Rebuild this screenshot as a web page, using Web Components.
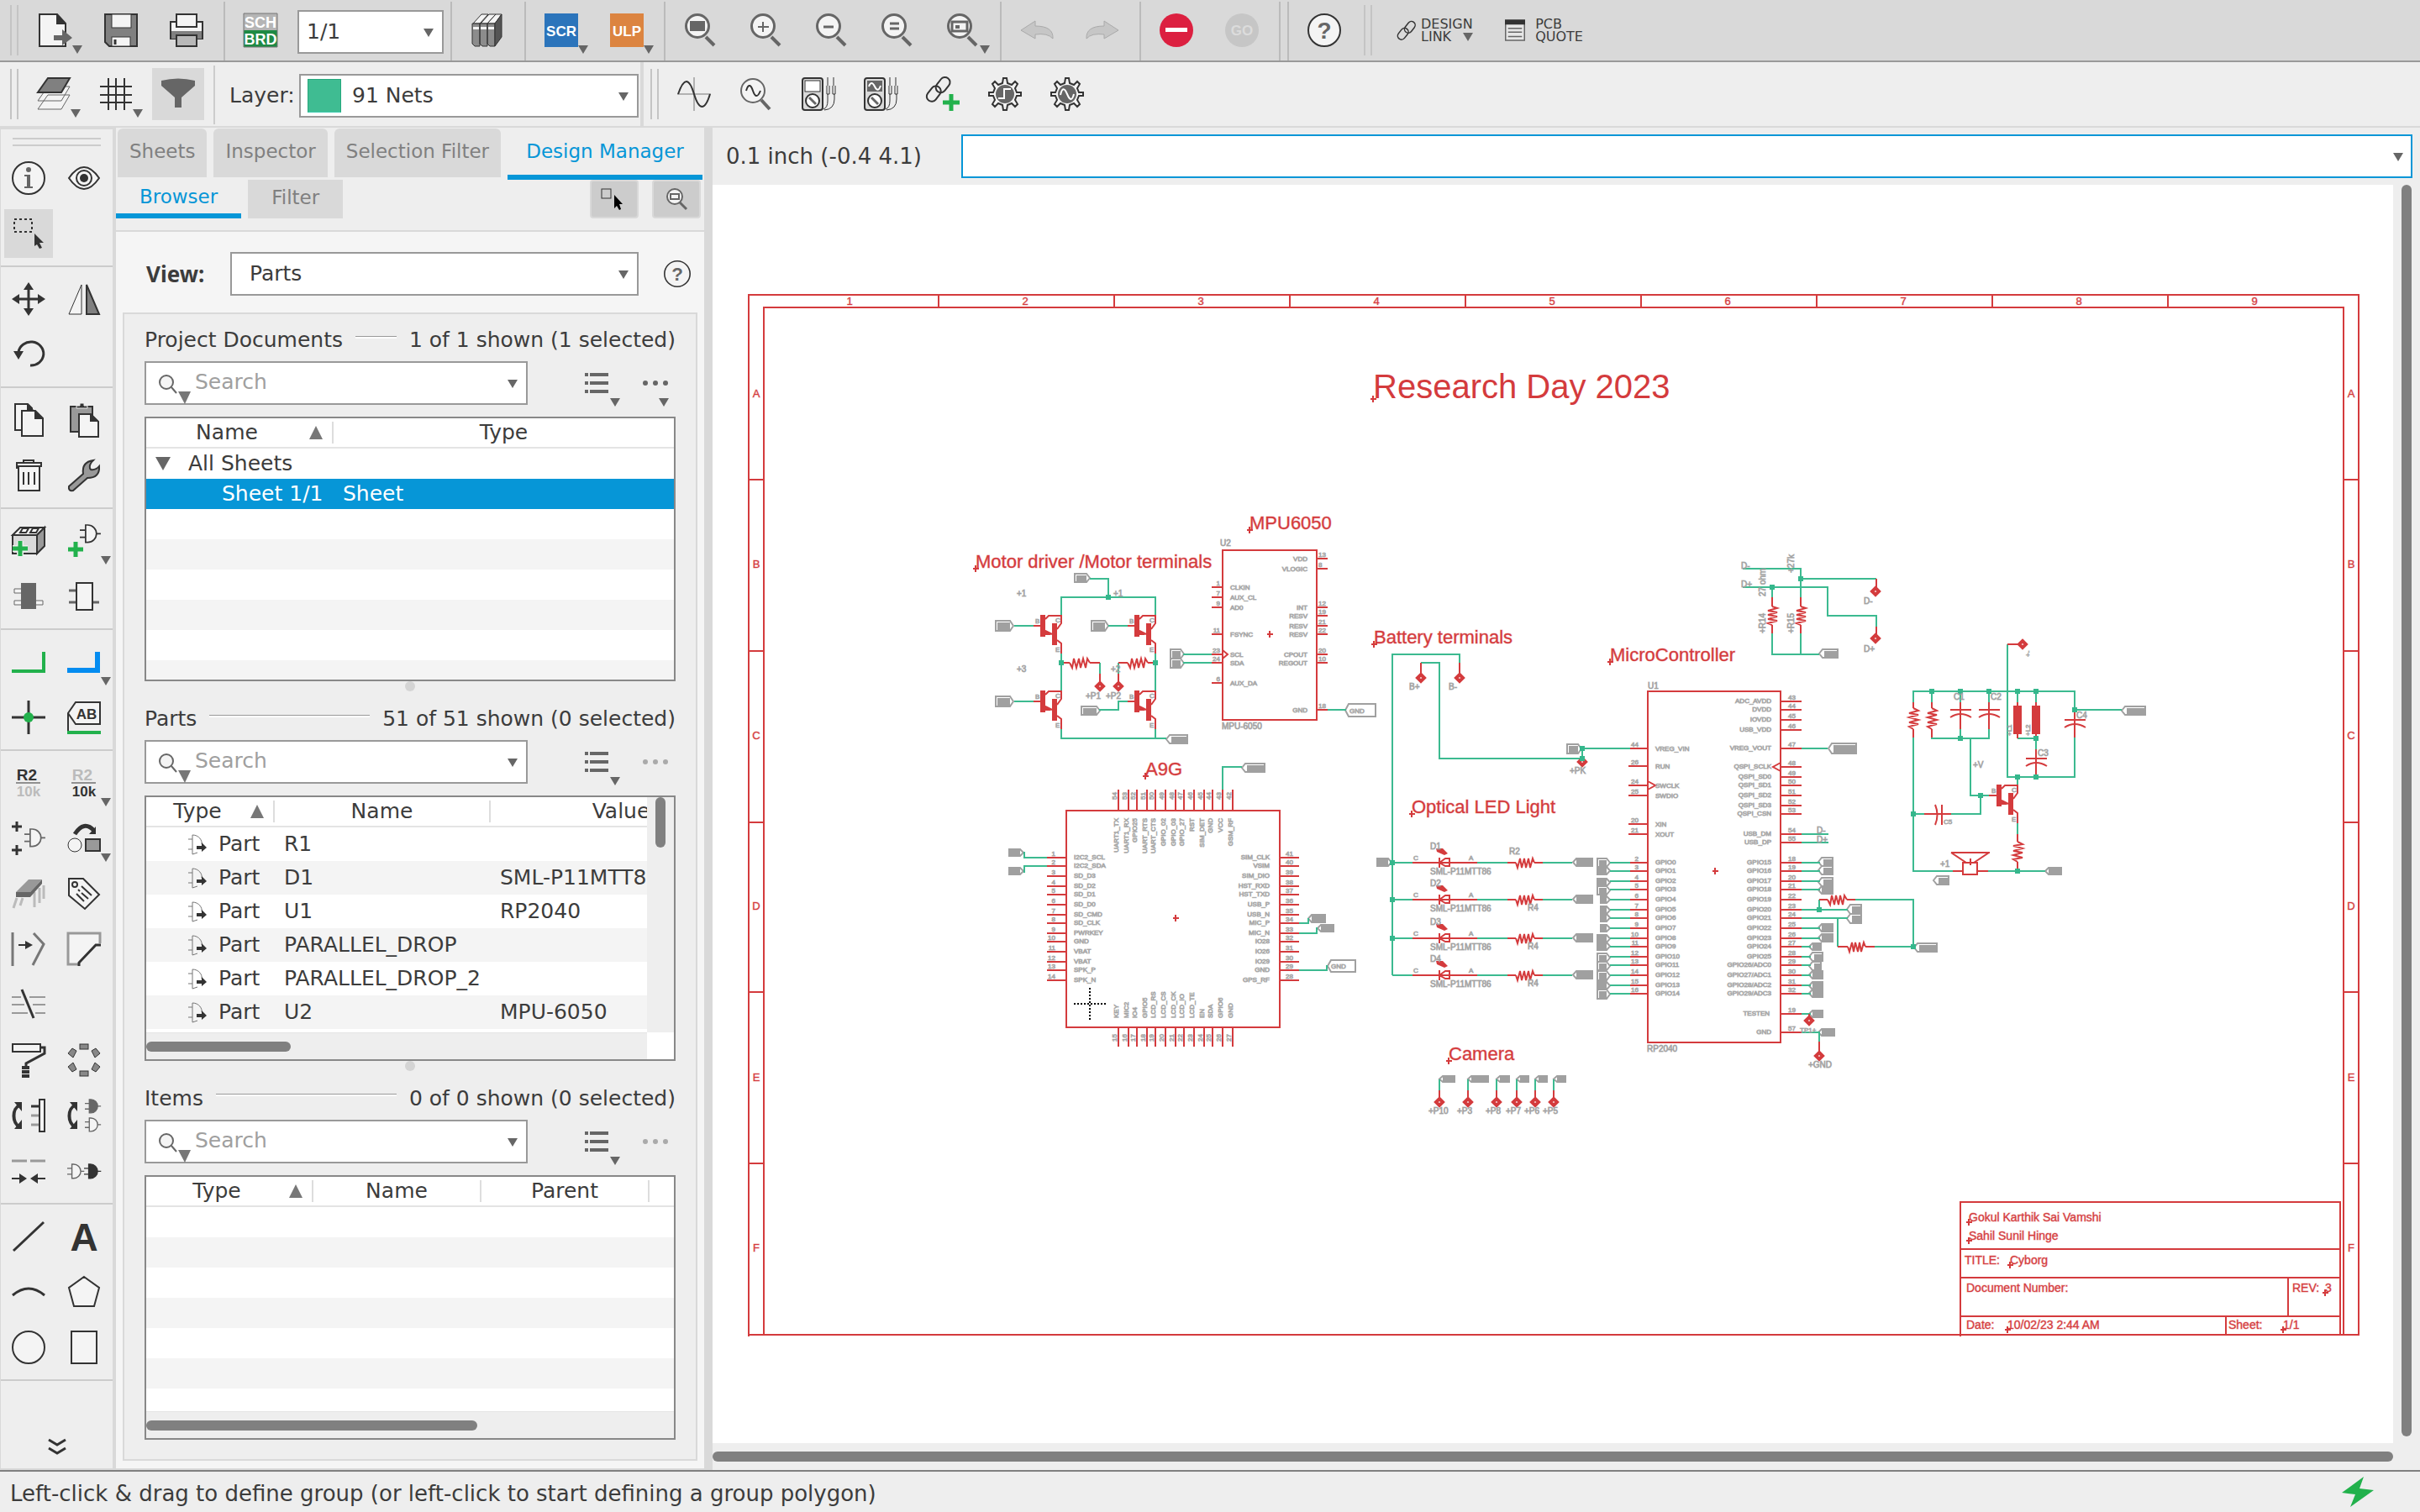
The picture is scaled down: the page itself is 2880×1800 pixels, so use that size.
<!DOCTYPE html>
<html lang="en">
<head>
<meta charset="utf-8">
<title>Schematic editor</title>
<style>
  html, body { margin: 0; height: 100%; }
  body { font: 25px/36px "DejaVu Sans", "Open Sans", sans-serif; color: #3c3c3c; background: #eee; overflow: hidden; }
</style>
</head>
<body>
<schematic-editor></schematic-editor>

<script>
/* ---------- icon artwork, 40 x 40 grid ---------- */
const K = '#333', M = '#666', L = '#f4f4f4', G = '#22b14c';
const lens = inner => `<circle cx="16" cy="15" r="13.5" fill="${L}" stroke="${M}" stroke-width="3"/><path d="M26 28L36 38" stroke="${M}" stroke-width="4"/>${inner}`;
const gate = (x, y, s, fill, stroke) => `<g transform="translate(${x} ${y}) scale(${s})" stroke="${stroke}" stroke-width="2" fill="none"><path d="M0 7H8M0 17H8M21 12H29"/><path d="M8 0V24H11A12 12 0 0 0 11 0Z" fill="${fill}"/></g>`;
const gear = inner => `<path d="M18 1h4l1 6 5 2 4-4 3 3-3 5 2 5h5v4h-5l-2 5 3 5-3 3-4-4-5 2-1 6h-4l-1-6-5-2-4 4-3-3 3-5-2-5H1v-4h5l2-5-3-5 3-3 4 4 5-2z" fill="${L}" stroke="${K}" stroke-width="2"/><circle cx="20" cy="20" r="11" fill="${M}"/>${inner}`;
const meter = inner => `<rect x="1" y="1" width="24" height="38" rx="3" fill="#d9d9d9" stroke="${K}" stroke-width="2"/><circle cx="13" cy="28" r="8" fill="#fff" stroke="${K}" stroke-width="2"/><path d="M9 24L17 32" stroke="${M}" stroke-width="3"/>${inner}<path d="M31 0V10M38 0V10M30 10V20M33 10V20M37 10V20M40 10V20M30 20h3M37 20h3M31 20V28Q31 36 26 38M39 20V26Q39 38 27 39" fill="none" stroke="${K}" stroke-width="1"/>`;
const chain = `<g transform="rotate(-52 20 20)" fill="none" stroke="${K}" stroke-width="2"><rect x="2" y="13" width="20" height="12" rx="6"/><rect x="17" y="15" width="20" height="12" rx="6"/></g>`;
const T = (x, y, s, fill, t, a = 'middle', w = 700) => `<text x="${x}" y="${y}" font-family="Liberation Sans, sans-serif" font-size="${s}" font-weight="${w}" fill="${fill}" text-anchor="${a}">${t}</text>`;
const plus = (x, y, s) => `<path d="M${x - s} ${y}H${x + s}M${x} ${y - s}V${y + s}" stroke="#eee" stroke-width="8"/><path d="M${x - s} ${y}H${x + s}M${x} ${y - s}V${y + s}" stroke="${G}" stroke-width="5"/>`;
const swap = `<path d="M9 8A9 13 0 0 0 9 33" fill="none" stroke="${K}" stroke-width="4"/><path d="M3 4H12V15ZM3 36H12V25Z" fill="${K}"/>`;

const ICONS = {
  file: `<path d="M1 1H22L32 12V39H1Z" fill="${L}" stroke="${K}" stroke-width="2"/><path d="M21 0L33 13H21Z" fill="${K}"/><path d="M18 26H28V19L40 29L28 38V32H18Z" fill="${M}"/>`,
  save: `<path d="M1 1H39V39H6L1 34Z" fill="#808080" stroke="${K}" stroke-width="2"/><rect x="9" y="1" width="23" height="16" fill="${L}" stroke="${K}"/><rect x="9" y="28" width="22" height="11" fill="${L}" stroke="${K}"/><path d="M13 31V37" stroke="${K}" stroke-width="3"/>`,
  print: `<rect x="1" y="10" width="38" height="20" fill="${L}" stroke="${K}" stroke-width="2"/><rect x="2" y="21" width="36" height="9" fill="#808080"/><rect x="8" y="1" width="24" height="15" fill="${L}" stroke="${K}" stroke-width="2"/><rect x="8" y="26" width="24" height="13" fill="#b8b8b8" stroke="${K}" stroke-width="2"/>`,
  schbrd: `<rect x="0" y="0" width="40" height="40" fill="#b5b5b5"/><rect x="0" y="20" width="40" height="20" fill="#1e8a44"/><path d="M0 0H40V40H0Z" fill="none" stroke="#777"/>${T(20, 17, 18, '#fff', 'SCH')}${T(20, 37, 18, '#fff', 'BRD')}`,
  books: `<g stroke="${K}" stroke-width="1"><path d="M3 12L13 1H21L11 12Z M12 12L22 1H30L20 12Z" fill="${L}"/><path d="M20 12L30 1H37L29 12Z" fill="${L}"/><path d="M2 12H11V39H5L2 36Z M11 12H20V39H14L11 36Z M20 12H29V39H23L20 36Z" fill="#8c8c8c"/><path d="M29 12L37 1V28L29 39Z" fill="#555"/></g><path d="M3 16H10V19H3ZM12 16H19V19H12ZM21 16H28V19H21Z" fill="${L}"/>`,
  scr: `<rect width="40" height="40" fill="#2b74bb"/>${T(20, 27, 17, '#fff', 'SCR')}`,
  ulp: `<rect width="40" height="40" fill="#dc8440"/>${T(20, 27, 17, '#fff', 'ULP')}`,
  zfit: lens(`<rect x="7" y="9" width="18" height="12" fill="${M}"/>`),
  zin: lens(`<path d="M10 16H23M16 10V22" stroke="${M}" stroke-width="2"/>`),
  zout: lens(`<path d="M10 16H22" stroke="${M}" stroke-width="3"/>`),
  zeq: lens(`<path d="M11 12H22M11 18H22" stroke="${M}" stroke-width="3"/>`),
  zsel: lens(`<rect x="7" y="10" width="18" height="11" fill="none" stroke="${M}" stroke-width="3"/><rect x="11" y="14" width="5" height="4" fill="${M}"/>`),
  undo: `<path d="M1 20L18 9V15Q40 15 39 30Q33 23 18 25V30Z" fill="#c6c6c6" stroke="#aaa"/>`,
  redo: `<path d="M39 20L22 9V15Q0 15 1 30Q7 23 22 25V30Z" fill="#c6c6c6" stroke="#aaa"/>`,
  stop: `<circle cx="20" cy="20" r="20" fill="#dc2040"/><rect x="7" y="17" width="26" height="5" fill="#fff"/>`,
  go: `<circle cx="20" cy="20" r="20" fill="#c6c6c6"/>${T(20, 26, 17, '#dcdcdc', 'GO')}`,
  help: `<circle cx="20" cy="20" r="19" fill="${L}" stroke="${K}" stroke-width="2"/>${T(20, 30, 28, M, '?')}`,
  chain,
  quote: `<rect x="5" y="5" width="30" height="31" fill="#e6e6e6" stroke="${M}" stroke-width="2"/><rect x="4" y="3" width="32" height="8" fill="${K}"/><path d="M9 17H31M9 23H31M9 30H31" stroke="${M}" stroke-width="2"/>`,
  layers: `<path d="M13 21H39L29 38H1Z M13 11H39L29 28H1Z" fill="${L}" stroke="${M}"/><path d="M13 1H39L29 18H1Z" fill="#808080" stroke="${K}" stroke-width="2"/>`,
  grid: `<path d="M11 1V39M20 1V39M30 1V39M1 11H39M1 21H39M1 30H39" stroke="${K}" stroke-width="2"/>`,
  filter: `<path d="M0 4Q20 -1 40 4V10L24 24V36H16V24L0 10Z" fill="${M}"/>`,
  sine: `<path d="M0 20H40M20 0V40" stroke="#777" stroke-width="1"/><path d="M1 20C8 0 14 0 20 20S33 40 39 20" fill="none" stroke="${K}" stroke-width="2"/>`,
  zsine: `<circle cx="16" cy="16" r="14" fill="${L}" stroke="${M}" stroke-width="2"/><path d="M26 27L36 38" stroke="${M}" stroke-width="4"/><path d="M8 16C11 6 14 10 16 16S21 26 25 16" fill="none" stroke="${K}" stroke-width="2"/>`,
  meter1: meter(`<rect x="4" y="4" width="18" height="13" fill="#fff" stroke="${K}"/>`),
  meter2: meter(`<rect x="4" y="4" width="18" height="13" fill="${M}"/><path d="M6 11Q9 3 13 11T20 10" fill="none" stroke="#fff" stroke-width="2"/>`),
  chainplus: `<g transform="translate(-5 -6)">${chain}</g>${plus(30, 30, 10)}`,
  gear1: gear(`<path d="M12 25H19V14H27" fill="none" stroke="#fff" stroke-width="2"/>`),
  gear2: gear(`<path d="M12 21Q15 8 20 20T28 20" fill="none" stroke="#fff" stroke-width="2"/>`),
  info: `<circle cx="20" cy="20" r="19" fill="${L}" stroke="${K}"  stroke-width="2"/><circle cx="20" cy="10" r="3" fill="${M}"/><path d="M15 16H22V30H25V32H15V30H18V18H15Z" fill="${M}"/>`,
  eye: `<path d="M2 20Q20 -6 38 20Q20 46 2 20Z" fill="${L}" stroke="${K}" stroke-width="2"/><circle cx="20" cy="20" r="9" fill="none" stroke="${K}" stroke-width="2"/><circle cx="20" cy="20" r="5" fill="${K}"/>`,
  select: `<rect x="3" y="3" width="21" height="15" fill="none" stroke="${K}" stroke-width="2" stroke-dasharray="3 3"/><path d="M27 20L38 31H33L36 37L33 38L30 33L27 35Z" fill="${K}"/>`,
  move: `<path d="M20 3V37M3 20H37" stroke="${K}" stroke-width="3"/><path d="M20 0L26 9H14ZM20 40L26 31H14ZM0 20L9 14V26ZM40 20L31 14V26Z" fill="${K}"/>`,
  mirror: `<path d="M17 3V38H2Z" fill="${L}" stroke="${K}"/><path d="M23 3V38H38Z" fill="#808080" stroke="${K}" stroke-width="2"/>`,
  rotate: `<path d="M8 17A15 14 0 1 1 22 33" fill="none" stroke="${K}" stroke-width="3"/><path d="M2 16H14L8 26Z" fill="${K}"/>`,
  copy: `<path d="M4 1H19L24 6V32H4Z" fill="${L}" stroke="${K}" stroke-width="2"/><path d="M18 0L26 8H18Z" fill="${K}"/><path d="M12 9H28L37 18V39H12Z" fill="${L}" stroke="${K}" stroke-width="2"/><path d="M27 8L38 19H27Z" fill="${K}"/>`,
  paste: `<rect x="4" y="4" width="26" height="30" fill="#999" stroke="${K}" stroke-width="2"/><path d="M11 6V3H15V0H20V3H24V6Z" fill="${K}" stroke="#eee"/><path d="M14 13H28L37 22V40H14Z" fill="${L}" stroke="${K}" stroke-width="2"/><path d="M27 12L38 22H27Z" fill="${K}"/>`,
  trash: `<path d="M14 6V2H26V6M6 12V5H35V9H6M8 9V38H33V9" fill="${L}" stroke="${K}" stroke-width="2"/><path d="M14 16V31M20 16V31M27 16V31" stroke="${K}" stroke-width="2"/>`,
  wrench: `<path d="M2 33L19 18Q17 4 31 2L29 4Q25 10 28 13Q34 14 38 9Q39 23 24 23L7 38Q1 39 2 33Z" fill="#999" stroke="${K}" stroke-width="2"/>`,
  brick: `<path d="M1 13L10 4H39L30 13Z" fill="${L}" stroke="${K}" stroke-width="2"/><path d="M39 4V26L30 35V13Z" fill="#999" stroke="${K}" stroke-width="2"/><path d="M1 13H30V35H1Z" fill="#d9d9d9" stroke="${K}" stroke-width="2"/><path d="M10 10L13 5H20L17 10ZM22 10L25 5H32L29 10Z" fill="#fff" stroke="${K}" stroke-width="2"/>${plus(10, 29, 9)}`,
  addgate: `${gate(15, 1, 0.86, L, K)}${plus(10, 30, 9)}`,
  ic1: `<path d="M11 11H3V16H11M11 25H3V30H11M29 25H37V30H29" fill="${L}" stroke="${M}" stroke-width="1"/><rect x="11" y="4" width="18" height="31" fill="${M}"/>`,
  ic2: `<path d="M2 13H11M2 27H11M30 27H38" stroke="${M}" stroke-width="3"/><rect x="11" y="4" width="19" height="32" fill="${L}" stroke="${K}" stroke-width="2"/>`,
  net: `<path d="M0 31H38V8" fill="none" stroke="${G}" stroke-width="4"/>`,
  bus: `<path d="M0 30H36V8" fill="none" stroke="#048cf0" stroke-width="6"/>`,
  junction: `<path d="M20 0V40M0 20H40" stroke="${K}" stroke-width="3"/><circle cx="20" cy="20" r="6" fill="${G}"/>`,
  label: `<path d="M1 37V15L10 2H39V28H10L1 15" fill="${L}" stroke="${K}" stroke-width="2"/><path d="M0 38H40" stroke="${G}" stroke-width="4"/>${T(23, 22, 17, K, 'AB')}`,
  name: `${T(18, 17, 19, K, 'R2')}<path d="M5 20H34" stroke="${K}"/>${T(20, 36, 17, '#bbb', '10k')}`,
  value: `${T(18, 17, 19, '#bbb', 'R2')}<path d="M5 20H34" stroke="${K}"/>${T(20, 36, 17, K, '10k')}`,
  gateadd: `<path d="M0 6H12M6 0V12M0 34H12M6 28V40" stroke="${K}" stroke-width="3"/>${gate(15, 9, 0.86, L, M)}`,
  replace: `<path d="M9 15Q20 -2 32 11" fill="none" stroke="${K}" stroke-width="5"/><path d="M26 15H34V6Z" fill="${K}"/><circle cx="9" cy="28" r="8" fill="${L}" stroke="${K}"/><rect x="22" y="21" width="17" height="14" fill="#999" stroke="${K}" stroke-width="2"/>`,
  chip: `<path d="M6 25L2 37M13 25L10 34M27 18V36M33 13V31M38 10V26" stroke="#bbb" stroke-width="3"/><path d="M5 18L20 3H36L22 18Z" fill="#999"/><path d="M5 18H22L36 3V8L22 24H5Z" fill="${M}"/>`,
  tag: `<path d="M2 2H19L38 21L21 38L2 22Z" fill="${L}" stroke="${K}" stroke-width="2"/><circle cx="9" cy="9" r="3" fill="none" stroke="${K}" stroke-width="2"/><path d="M17 11L29 22M13 15L15 17M17 19L25 26M11 20L20 29" stroke="${K}" stroke-width="2"/>`,
  split: `<path d="M1 0V40" stroke="#777" stroke-width="3"/><path d="M8 15H18" stroke="${K}" stroke-width="2"/><path d="M16 10L25 15L16 20Z" fill="${K}"/><path d="M26 1L38 14L25 39" fill="none" stroke="#777" stroke-width="3"/>`,
  miter: `<path d="M14 38H1V1H39V13" fill="${L}" stroke="#999" stroke-width="3"/><path d="M14 40V36L34 15H40" fill="none" stroke="${K}" stroke-width="3"/>`,
  slash: `<path d="M0 11H11M21 11H40M0 20H15M25 20H40M0 30H19M28 30H40" stroke="#999" stroke-width="2"/><path d="M12 2L26 36" stroke="${K}" stroke-width="3"/>`,
  roller: `<rect x="1" y="1" width="33" height="9" fill="${L}" stroke="${K}" stroke-width="2"/><path d="M34 5H39V12L17 24V28" fill="none" stroke="${K}" stroke-width="3"/><path d="M12 29H21M12 34H21M12 39H21" stroke="${K}" stroke-width="4"/>`,
  ring: `<g fill="#888" stroke="${K}" stroke-width="1"><rect x="15" y="1" width="10" height="6"/><rect x="15" y="33" width="10" height="6"/><path d="M1 12L6 6L11 9L7 17ZM39 12L34 6L29 9L33 17ZM1 28L6 34L11 31L7 23ZM39 28L34 34L29 31L33 23Z"/></g>`,
  pinswap: `${swap}<path d="M23 9H33" stroke="${K}" stroke-width="3"/><path d="M23 20H33M23 31H33" stroke="#999" stroke-width="3"/><rect x="33" y="1" width="6" height="38" fill="${L}" stroke="${K}" stroke-width="2"/>`,
  gateswap: `${swap}${gate(21, 1, 0.66, M, M)}${gate(21, 23, 0.66, L, M)}`,
  align: `<path d="M0 8H18M22 8H40" stroke="#999" stroke-width="3"/><path d="M0 29H10M30 29H40" stroke="${K}" stroke-width="2"/><path d="M9 23L18 29L9 35ZM31 23L22 29L31 35Z" fill="${K}"/>`,
  gates2: `${gate(0, 12, 0.7, L, M)}${gate(20, 12, 0.7, K, K)}`,
  line: `<path d="M2 37L38 3" stroke="${K}" stroke-width="3"/>`,
  text: T(20, 37, 46, K, 'A'),
  arc: `<path d="M1 24Q20 8 39 24" fill="none" stroke="${K}" stroke-width="3"/>`,
  poly: `<path d="M20 2L38 15L32 37H8L2 15Z" fill="${L}" stroke="${K}" stroke-width="2"/>`,
  circle: `<circle cx="20" cy="20" r="19" fill="${L}" stroke="${K}" stroke-width="2"/>`,
  rect: `<rect x="5" y="1" width="30" height="38" fill="${L}" stroke="${K}" stroke-width="2"/>`,
  more: `<path d="M10 6L20 12L30 6M10 16L20 22L30 16" fill="none" stroke="${K}" stroke-width="3"/>`,
  pick: `<rect x="5" y="8" width="11" height="11" fill="none" stroke="${K}"/><path d="M20 15L30 26H26L28 32L26 33L23 28L20 31Z" fill="#000"/>`,
  zsmall: `<circle cx="18" cy="17" r="9" fill="${L}" stroke="${M}" stroke-width="2"/><rect x="13" y="14" width="10" height="6" fill="none" stroke="${M}" stroke-width="2"/><path d="M24 24L32 32" stroke="${M}" stroke-width="3"/>`,
  find: `<circle cx="16" cy="15" r="8" fill="${L}" stroke="${M}" stroke-width="2"/><path d="M22 21L28 28" stroke="${M}" stroke-width="2"/><path d="M30 26H45L38 41Z" fill="#777"/>`,
  list: `<path d="M5 10H9M5 20H9M5 30H9M11 10H33M11 20H33M11 30H33" stroke="${M}" stroke-width="4"/>`,
  dots: `<circle cx="8" cy="20" r="3"/><circle cx="20" cy="20" r="3"/><circle cx="32" cy="20" r="3"/>`,
  part: `<path d="M9 14H14M9 26H14M14 9V32M14 9C22 9 26 16 25 20M14 32L20 30" fill="none" stroke="#777"/><path d="M19 22H25V18L31 24L25 29V26H19Z" fill="${K}"/>`,
  up: `<path d="M12 28L20 12L28 28Z" fill="#777"/>`,
  down: `<path d="M11 12H29L20 28Z" fill="${M}"/>`,
};

const define = (name, html, setup) => customElements.define(name, class extends HTMLElement {
  connectedCallback() {
    if (this.shadowRoot) return;
    const root = this.attachShadow({ mode: 'open' });
    const t = document.createElement('template');
    t.innerHTML = typeof html === 'function' ? html(this) : html;
    root.append(t.content.cloneNode(true));
    if (setup) setup(this, root);
  }
});

define('app-icon', el => `<style>:host{display:block;width:40px;height:40px;flex:none}svg{display:block;width:100%;height:100%;overflow:visible}</style>
<svg viewBox="0 0 40 40" aria-hidden="true">${ICONS[el.getAttribute('name')]}${el.hasAttribute('menu') ? '<path d="M40 38H52L46 48Z" fill="#666"/>' : ''}</svg>`);

define('tool-button', el => `<style>
:host{display:block;flex:none;width:var(--tool-width,78px);height:var(--tool-height,72px)}
button{all:unset;display:flex;width:100%;height:100%;align-items:center;justify-content:center;box-sizing:border-box}
:host([active]) button{background:#d9d9d9;background-clip:content-box;padding:var(--tool-inset,4px)}
</style><button type="button" aria-label="${el.getAttribute('icon')}"><app-icon name="${el.getAttribute('icon')}" ${el.hasAttribute('menu') ? 'menu' : ''}></app-icon></button>`);

define('tool-line', `<style>:host{display:block;flex:none;width:2px;background:#bbb;align-self:stretch;margin:2px 3px 0 5px}:host([pale]){background:#ccc;margin:4px 3px 2px 5px}</style>`);
define('tool-grip', `<style>:host{display:block;flex:none;width:6px;height:60px;border:solid #c4c4c4;border-width:0 2px;margin:0 5px 0 12px}</style>`);

/* drop-down with a drawn arrow */
define('drop-down', el => `<style>
:host{display:block;position:relative;height:52px}
select{appearance:none;width:100%;height:100%;box-sizing:border-box;border:2px solid #999;border-radius:0;background:#fff;color:inherit;font:inherit;padding:0 40px 0 var(--inset,9px);margin:0}
i{position:absolute;right:12px;top:22px;border:6px solid transparent;border-top:10px solid #666;border-bottom:0}
b{position:absolute;left:10px;top:6px;width:38px;height:38px;background:#3fbc92;border:1px solid #25a87c;border-bottom-color:#3ccab0;display:none}
:host([swatch]) b{display:block}
</style><select aria-label="${el.getAttribute('label')}"><option>${el.getAttribute('value')}</option></select><b></b><i></i>`);

define('top-bar', `<style>
:host{display:flex;align-items:center;height:72px;background:#d9d9d9;border-bottom:2px solid #999}
drop-down{width:174px;margin:4px 3px 0 5px}
.help-end{margin-left:8px}
.link{all:unset;display:flex;align-items:center;font-size:16px;line-height:15px}
.link app-icon{width:30px;height:30px}
.a{margin-left:21px;gap:2px}.b{margin-left:35px;gap:9px}
.c{display:inline-block;border:6px solid transparent;border-top:10px solid #666;border-bottom:0;margin-left:9px}
</style>
<tool-grip></tool-grip><tool-button icon="file" menu></tool-button><tool-button icon="save"></tool-button><tool-button icon="print"></tool-button><tool-line></tool-line>
<tool-button icon="schbrd"></tool-button><drop-down label="Sheet" value="1/1"></drop-down><tool-line></tool-line>
<tool-button icon="books"></tool-button><tool-line></tool-line>
<tool-button icon="scr" menu></tool-button><tool-button icon="ulp" menu></tool-button><tool-line></tool-line>
<tool-button icon="zfit"></tool-button><tool-button icon="zin"></tool-button><tool-button icon="zout"></tool-button><tool-button icon="zeq"></tool-button><tool-button icon="zsel" menu></tool-button><tool-line></tool-line>
<tool-button icon="undo"></tool-button><tool-button icon="redo"></tool-button><tool-line></tool-line>
<tool-button icon="stop"></tool-button><tool-button icon="go"></tool-button><tool-line></tool-line><tool-line></tool-line>
<tool-button icon="help"></tool-button><tool-grip class="help-end"></tool-grip>
<button class="link a"><app-icon name="chain"></app-icon><span>DESIGN<br>LINK <i class="c"></i></span></button>
<button class="link b"><app-icon name="quote"></app-icon><span>PCB<br>QUOTE</span></button>`);

define('layer-bar', `<style>
:host{display:flex;align-items:center;height:76px;background:#eee;border-bottom:2px solid #d9d9d9;--tool-width:74px;--tool-height:76px}
tool-button[active]{--tool-inset:7px 6px}
label{margin:4px 0 0 14px;flex:none;width:83px}
drop-down{width:404px;margin-top:4px;--inset:61px}
.div{width:4px;align-self:stretch;background:#d9d9d9;margin-left:2px}
.div + tool-grip{margin-left:8px}
</style>
<tool-grip></tool-grip><tool-button icon="layers" menu></tool-button><tool-button icon="grid" menu></tool-button><tool-button icon="filter" active></tool-button><tool-line pale></tool-line>
<label>Layer:</label><drop-down label="Layer" value="91 Nets" swatch></drop-down><div class="div"></div><tool-grip></tool-grip>
<tool-button icon="sine"></tool-button><tool-button icon="zsine"></tool-button><tool-button icon="meter1"></tool-button><tool-button icon="meter2"></tool-button><tool-button icon="chainplus"></tool-button><tool-button icon="gear1"></tool-button><tool-button icon="gear2"></tool-button>`);

const groups = [
  ['info', 'eye', 'select!', ''], ['move', 'mirror', 'rotate', ''], ['copy', 'paste', 'trash', 'wrench'],
  ['brick', 'addgate*', 'ic1', 'ic2'], ['net', 'bus*', 'junction', 'label'],
  ['name', 'value*', 'gateadd', 'replace*', 'chip', 'tag', 'split', 'miter', 'slash', '', 'roller', 'ring', 'pinswap', 'gateswap', 'align', 'gates2'],
  ['line', 'text', 'arc', 'poly', 'circle', 'rect']];
define('side-tools', () => `<style>
:host{display:flex;flex-direction:column;box-sizing:border-box;width:138px;border:solid #d9d9d9;border-width:2px 4px 2px 1px;--tool-width:66px;--tool-height:66px;--tool-inset:4px}
.grip{height:6px;border:solid #ccc;border-width:2px 0;margin:10px 14px 0}
.g{display:grid;grid-template-columns:66px 66px;padding:5px 0;border-bottom:2px solid #ccc}
app-icon{margin:auto auto 0}
</style><div class="grip"></div>${groups.map(g => `<div class="g">${g.map(n => n ? `<tool-button icon="${n.replace(/[*!]/, '')}" ${n.includes('*') ? 'menu' : ''} ${n.includes('!') ? 'active' : ''}></tool-button>` : '<span></span>').join('')}</div>`).join('')}<app-icon name="more"></app-icon>`);

define('search-row', `<style>
:host{display:flex;align-items:center;height:52px;margin:6px 0 14px}
.box{position:relative;width:456px;height:52px}
input{box-sizing:border-box;width:100%;height:100%;border:2px solid #999;background:#fff;font:inherit;padding:0 30px 3px 58px;outline:0}
input::placeholder{color:#a0a0a0;opacity:1}
.box app-icon{position:absolute;left:10px;top:10px}
.box i{position:absolute;right:12px;top:22px;border:6px solid transparent;border-top:10px solid #666;border-bottom:0}
button{all:unset;width:40px;height:40px}
.l{margin-left:63px}.d{margin-left:29px;fill:#666}
:host([plain]) .d{fill:#aaa}
button svg{display:block;overflow:visible}
</style><div class="box"><input type="text" placeholder="Search" aria-label="Search"><app-icon name="find"></app-icon><i></i></div>
<button class="l" aria-label="List view"><svg width="40" height="40" viewBox="0 0 40 40">${ICONS.list}<path d="M35 38H47L41 48Z" fill="#666"/></svg></button>
<button class="d" aria-label="More"><svg width="40" height="40" viewBox="0 0 40 40">${ICONS.dots}<path class="m" d="M24 38H36L30 48Z"/></svg></button>`,
(el, root) => { if (el.hasAttribute('plain')) root.querySelector('.m').remove(); });

define('dm-section', el => `<style>
:host{display:flex;flex-direction:column;flex:1 1 0;min-height:0}
header{display:flex;align-items:center;height:38px;white-space:nowrap}
header hr{flex:1;border:0;border-top:1px solid #999;border-bottom:2px solid #fff;margin:0 15px 8px}
h2{font:inherit;margin:0}
</style><header><h2>${el.getAttribute('heading')}</h2><hr><span>${el.getAttribute('count')}</span></header>
<search-row ${el.hasAttribute('plain') ? 'plain' : ''}></search-row><slot></slot>`);

/* columns: "Title:width" list, first one is sorted; rows come from the DATA map */
const DATA = {
  sheets: ['<td class="tree"><span><app-icon name="down"></app-icon>All Sheets</span></td><td></td>', '<td class="leaf">Sheet 1/1</td><td>Sheet</td>'],
  parts: [['R1', ''], ['D1', 'SML-P11MTT86'], ['U1', 'RP2040'], ['PARALLEL_DROP', ''], ['PARALLEL_DROP_2', ''], ['U2', 'MPU-6050']]
    .map(r => `<td><span class="part"><app-icon name="part"></app-icon>Part</span></td><td>${r[0]}</td><td>${r[1]}</td>`),
  items: []
};
define('data-table', el => {
  const cols = el.getAttribute('columns').split(',').map(c => c.split(':'));
  const rows = DATA[el.getAttribute('rows')];
  const pad = Array(+el.getAttribute('blank')).fill(`<tr>${'<td></td>'.repeat(cols.length)}</tr>`).join('');
  return `<style>
:host{display:grid;flex:1 1 0;min-height:0;border:2px solid #888;background:#fff;grid-template:minmax(0,1fr) auto/minmax(0,1fr) auto}
.view{overflow:hidden}
table{border-collapse:separate;border-spacing:0;table-layout:fixed;width:max(100%, var(--table-width,0px))}
th{font-weight:400;padding:0;height:34px;border-bottom:2px solid #e4e4e4}
th div{display:flex;align-items:center;height:26px;line-height:26px;border-right:2px solid #ddd;box-sizing:border-box}
th:last-child div{border:0}
th div span{flex:1;text-align:center}
th app-icon{width:40px;margin-right:-1px;margin-left:-10px}
td{padding:0 0 0 11px;height:var(--row,36px);line-height:var(--row,36px);white-space:nowrap;overflow:hidden}
tbody tr:nth-child(even){background:#f4f4f4}
td app-icon{margin:-4px 0}
.tree{padding:0}.tree span{display:flex;align-items:center;gap:10px}
.leaf{padding-left:90px}
.part{display:flex;align-items:center;margin-left:30px;gap:5px}
:host([selected]) tbody tr:nth-child(2){background:#0696d7;color:#fff}
.h{height:32px;background:#eee;padding-top:10px;box-sizing:border-box;border-top:1px solid #e4e4e4}
.h i{display:block;height:12px;border-radius:6px;background:#808080;width:var(--thumb)}
.v{width:32px;background:#eee;box-sizing:border-box;padding-left:10px}
.v i{display:block;width:12px;height:60px;border-radius:6px;background:#808080}
</style><div class="view"><table><colgroup>${cols.map(c => `<col${c[1] ? ` style="width:${c[1]}px"` : ''}>`).join('')}</colgroup><thead><tr>${cols.map((c, i) => `<th scope="col"><div><span>${c[0]}</span>${i ? '' : '<app-icon name="up"></app-icon>'}</div></th>`).join('')}</tr></thead>
<tbody>${rows.map(r => `<tr>${r}</tr>`).join('')}${pad}</tbody></table></div>${el.hasAttribute('vbar') ? '<div class="v"><i></i></div>' : '<span></span>'}${el.hasAttribute('hbar') ? '<div class="h"><i></i></div>' : ''}`;
});

define('split-dot', `<style>:host{display:block;height:26px;flex:none}i{display:block;width:12px;height:12px;border-radius:6px;background:#d4d4d4;margin:0 auto}</style><i></i>`);

define('design-manager', `<style>
:host{display:flex;flex-direction:column;min-height:0;width:700px;background:#eee;box-sizing:border-box}
nav{display:flex;font-size:23px}
nav button{all:unset;box-sizing:border-box;background:#d9d9d9;color:#808080;text-align:center;border-radius:6px 6px 0 0;white-space:nowrap}
.top{gap:8px;padding:0 2px;height:62px}
.top button{height:58px;margin-top:1px;padding:0 14px 4px}
.top button.on,.sub button.on{background:none;color:#0696d7;border-radius:0;border-bottom:6px solid #0696d7}
.top button.on{height:61px;padding:0 0 1px;flex:1}
.sub{height:46px;gap:8px}
.sub button{padding:0 28px 4px;border-radius:0;height:46px;line-height:36px}
.sub button.on{padding-bottom:0}
.sub .sq{width:58px;padding:0;background:#ccc;border:2px solid #d9d9d9;border-radius:4px;display:flex;align-items:center;justify-content:center}
.sub .sq:nth-child(3){margin-left:auto}
.sub .sq + .sq{margin:0 4px 0 8px}
.page{flex:1;min-height:0;display:flex;flex-direction:column;margin-top:14px;border-top:2px solid #d9d9d9;border-bottom:2px solid #d9d9d9;background:#f5f5f5;padding:24px 8px 9px}
.view{display:flex;align-items:center;height:52px;padding:0 8px 0 28px}
.view b{width:100px;font-family:"Noto Sans",sans-serif;font-size:26px}
.view drop-down{width:486px;--inset:21px}
.view app-icon{width:32px;height:32px;margin-left:30px}
.box{flex:1;min-height:0;display:flex;flex-direction:column;border:2px solid #d9d9d9;background:#eee;margin-top:20px;padding:12px 24px 23px}
</style>
<nav class="top"><button>Sheets</button><button>Inspector</button><button>Selection Filter</button><button class="on">Design Manager</button></nav>
<nav class="sub"><button class="on">Browser</button><button>Filter</button><button class="sq" aria-label="Pick"><app-icon name="pick"></app-icon></button><button class="sq" aria-label="Zoom"><app-icon name="zsmall"></app-icon></button></nav>
<div class="page"><div class="view"><b>View:</b><drop-down label="View" value="Parts"></drop-down><app-icon name="help"></app-icon></div>
<div class="box">
<dm-section heading="Project Documents" count="1 of 1 shown (1 selected)"><data-table columns="Name:223,Type" rows="sheets" blank="7" selected></data-table></dm-section><split-dot></split-dot>
<dm-section heading="Parts" count="51 of 51 shown (0 selected)" plain><data-table columns="Type:153,Name:257,Value:310" rows="parts" blank="1" style="--row:40px;--table-width:720px;--thumb:172px" vbar hbar></data-table></dm-section><split-dot></split-dot>
<dm-section heading="Items" count="0 of 0 shown (0 selected)" plain><data-table columns="Type:199,Name:200,Parent:200," rows="items" blank="8" style="--thumb:394px" hbar></data-table></dm-section>
</div></div>`);

/* ---------- schematic sheet ---------- */
function sheet() {
  let net = '', sym = '', box = '', fill = '', txt = '', gray = '', grayFill = '', dots = '', rings = '';
  const N = d => net += d, R = d => sym += d;
  const J = (...p) => { for (let i = 0; i < p.length; i += 2) dots += `M${p[i] - 3} ${p[i + 1] - 3}h6v6h-6z`; };
  const dia = (x, y) => { rings += `M${x} ${y - 4}L${x + 4} ${y}L${x} ${y + 4}L${x - 4} ${y}Z`; };
  const zh = (x, y, w) => { let d = `M${x} ${y}`; for (let i = 1; i < 9; i++) d += `L${x + Math.round(i * w / 9)} ${y + (i % 2 ? 6 : -5)}`; box += d + `L${x + w} ${y}`; };
  const zv = (x, y, h) => { let d = `M${x} ${y}`; for (let i = 1; i < 9; i++) d += `L${x + (i % 2 ? 6 : -5)} ${y + Math.round(i * h / 9)}`; box += d + `L${x} ${y + h}`; };
  const tag = (x1, y1, x2, y2, side = 'r', solid = true) => {
    const m = (y1 + y2) / 2;
    gray += side === 'r' ? `M${x2 + 4} ${m}L${x2} ${y1}H${x1}V${y2}H${x2}Z` : `M${x1 - 4} ${m}L${x1} ${y1}H${x2}V${y2}H${x1}Z`;
    /* the net name fills the tag; roomy tags keep a thin gap under the outline */
    const gap = y2 - y1 > 9 ? 2 : 0;
    if (solid) grayFill += `M${x1 + gap} ${y1 + gap}H${x2}V${y2}H${x1 + gap}Z`;
  };
  const t = (x, y, s, a = 'start', c = 's', r = '') => { txt += `<text x="${x}" y="${y}" class="${c}" text-anchor="${a}"${r ? ` transform="rotate(${r} ${x} ${y})"` : ''}>${s}</text>`; };
  const title = (x, y, s, c = 'h') => { t(x, y, s, 'start', c); R(`M${x - 3} ${y + 1}h7M${x} ${y - 3}v8`); };
  const npn = (x, y) => {
    fill += `M${x} ${y}h6v26h-6zM${x + 14} ${y + 10}h6v26h-6z`;
    box += `M${x + 6} ${y + 5}L${x + 10} ${y + 1}H${x + 25}V${y + 10}L${x + 20} ${y + 17}M${x + 6} ${y + 19}L${x + 14} ${y + 23}M${x + 20} ${y + 30}L${x + 25} ${y + 34}V${y + 46}M${x - 8} ${y + 13}H${x}`;
    fill += `M${x + 6} ${y + 18}L${x + 13} ${y + 24}H${x + 6}Z`;
    t(x - 6, y + 10, 'B'); t(x + 18, y + 9, 'C'); t(x + 18, y + 44, 'E');
  };
  const cap = (x, y) => { box += `M${x - 12} ${y}h25M${x - 12} ${y + 9}Q${x} ${y + 1} ${x + 13} ${y + 9}`; };

  /* frame */
  box += 'M891 1591V351H2807V1589H890M909 1589V366H2789V1589';
  for (let i = 0; i < 8; i++) box += `M${1117 + 209 * i} 351V366`;
  [571, 775, 979, 1181, 1385].forEach(y => box += `M891 ${y}H909M2789 ${y}H2807`);
  for (let i = 0; i < 9; i++) t(1011 + 209 * i, 363, i + 1, 'middle', 'f');
  'ABCDEF'.split('').forEach((c, i) => { const y = 473 + Math.round(203.4 * i); t(900, y, c, 'middle', 'f'); t(2798, y, c, 'middle', 'f'); });
  box += 'M2333 1591V1431H2785V1589M2333 1487H2785M2333 1521H2785M2333 1567H2785M2723 1521V1567M2649 1567V1589';
  title(2343, 1454, 'Gokul Karthik Sai Vamshi', 'b'); title(2343, 1476, 'Sahil Sunil Hinge', 'b');
  t(2338, 1505, 'TITLE:', 'start', 'b'); title(2392, 1505, 'Cyborg', 'b');
  t(2340, 1538, 'Document Number:', 'start', 'b'); t(2728, 1538, 'REV:', 'start', 'b'); title(2767, 1538, '3', 'b');
  t(2340, 1582, 'Date:', 'start', 'b'); title(2389, 1582, '10/02/23 2:44 AM', 'b');
  t(2652, 1582, 'Sheet:', 'start', 'b'); title(2717, 1582, '1/1', 'b');
  title(1634, 474, 'Research Day 2023', 'x');

  /* motor driver */
  title(1161, 676, 'Motor driver /Motor terminals');
  N('M1297 689H1319V711M1263 733V711H1375V733M1263 778V823M1375 778V823M1263 868V879H1388M1375 868V879');
  J(1319, 711, 1263, 789, 1375, 789);
  [[1238, 732], [1350, 732], [1238, 822], [1350, 822]].forEach(p => npn(...p));
  N('M1207 745H1230M1319 745H1342M1207 835H1230M1308 845H1331V835H1342');
  tag(1279, 683, 1293, 693); tag(1185, 739, 1202, 751); tag(1299, 739, 1315, 751); tag(1185, 829, 1202, 841); tag(1287, 841, 1305, 851); tag(1392, 875, 1413, 885, 'l');
  R('M1263 789H1273M1297 789H1309'); zh(1273, 789, 24); zh(1342, 789, 24); R('M1331 789H1342M1366 789H1375');
  N('M1309 789V802M1331 789V802'); R('M1309 802V812M1331 802V812'); dia(1309, 817); dia(1331, 817);
  t(1210, 710, '+1', 'start', 'm'); t(1325, 710, '+1', 'start', 'm'); t(1210, 800, '+3', 'start', 'm'); t(1322, 800, '+2', 'start', 'm'); t(1292, 832, '+P1', 'start', 'm'); t(1316, 832, '+P2', 'start', 'm');

  /* MPU6050 */
  title(1487, 630, 'MPU6050');
  box += 'M1455 655H1567V857H1455Z';
  const pins = (x1, x2, ys) => ys.forEach(y => box += `M${x1} ${y}H${x2}`);
  pins(1442, 1455, [699, 711, 723, 755, 779, 789, 813]); pins(1567, 1580, [665, 677, 723, 733, 745, 755, 779, 789, 845]);
  [['CLKIN', 699, 1], ['AUX_CL', 711, 7], ['AD0', 723, 9], ['FSYNC', 755, 11], ['SCL', 779, 23], ['SDA', 789, 24], ['AUX_DA', 813, 6]].forEach(p => { t(1464, p[1] + 3, p[0]); t(1452, p[1] - 2, p[2], 'end'); });
  [['VDD', 665, 13], ['VLOGIC', 677, 8], ['INT', 723, 12], ['RESV', 733, 19], ['RESV', 745, 21], ['RESV', 755, 22], ['CPOUT', 779, 20], ['REGOUT', 789, 10], ['GND', 845, 18]].forEach(p => { t(1556, p[1] + 3, p[0], 'end'); t(1569, p[1] - 2, p[2]); });
  N('M1408 779H1443M1408 789H1443M1577 845H1602'); tag(1393, 773, 1405, 784); tag(1393, 784, 1405, 795); tag(1605, 838, 1637, 853, 'l', false); t(1606, 849, 'GND');
  R('M1508 755h7M1511 751v8M1455 774L1461 779L1455 784'); t(1452, 650, 'U2', 'start', 'm'); t(1454, 868, 'MPU-6050', 'start', 'm');

  /* A9G */
  title(1363, 923, 'A9G');
  box += 'M1269 965H1523V1223H1269Z';
  const ay = [1021, 1031, 1043, 1055, 1065, 1077, 1089, 1099, 1111, 1121, 1133, 1145, 1155, 1167];
  const ax = [1331, 1343, 1353, 1365, 1375, 1387, 1399, 1409, 1421, 1433, 1443, 1455, 1467];
  pins(1246, 1269, ay); pins(1523, 1546, ay);
  ax.forEach((x, i) => { box += `M${x} 940V965M${x} 1223V1246`; t(x - 2, 952, 54 - i, 'start', 's', -90); t(x - 2, 1240, 15 + i, 'start', 's', -90); });
  ['I2C2_SCL', 'I2C2_SDA', 'SD_D3', 'SD_D2', 'SD_D1', 'SD_D0', 'SD_CMD', 'SD_CLK', 'PWRKEY', 'GND', 'VBAT', 'VBAT', 'SPK_P', 'SPK_N'].forEach((s, i) => { t(1278, ay[i] + 2, s); t(1256, ay[i] - 2, i + 1, 'end'); });
  ['SIM_CLK', 'VSIM', 'SIM_DIO', 'HST_RXD', 'HST_TXD', 'USB_P', 'USB_N', 'MIC_P', 'MIC_N', 'IO28', 'IO26', 'IO29', 'GND', 'GPS_RF'].forEach((s, i) => { t(1511, ay[i] + 2, s, 'end'); t(1530, ay[i] - 2, 41 - i); });
  ['UART1_TX', 'UART1_RX', 'GPIO25', 'UART_RTS', 'UART_CTS', 'GPIO_02', 'GPIO_03', 'GPIO_27', 'RST', 'SIM_DET', 'GND', 'VCC', 'GSM_RF'].forEach((s, i) => t(ax[i], 974, s, 'end', 's', -90));
  ['KEY', 'MIC2', 'IO4', 'GPIO5', 'LCD_RS', 'LCD_CS', 'LCD_CK', 'LCD_IO', 'LCD_TE', 'EN', 'SDA', 'GPIO6', 'GND'].forEach((s, i) => t(ax[i], 1212, s, 'start', 's', -90));
  N('M1219 1014V1021H1247M1219 1039V1031H1247M1455 941V913H1478M1545 1099H1557V1093M1545 1111H1567V1104M1545 1155H1579V1149');
  tag(1201, 1011, 1214, 1019); tag(1201, 1033, 1214, 1041); tag(1482, 909, 1505, 919, 'l'); tag(1561, 1089, 1577, 1098, 'l'); tag(1572, 1101, 1587, 1109, 'l'); tag(1584, 1143, 1613, 1157, 'l', false); t(1584, 1153, 'GND');
  R('M1396 1093h7M1399 1089v8');

  /* battery and LEDs */
  title(1635, 766, 'Battery terminals');
  N('M1657 1161V779H1737V789M1691 789H1713V903H1883V891H1940');
  R('M1737 789V801M1691 789V801M1940 891H1961'); dia(1737, 807); dia(1691, 807); dia(1883, 907); J(1883, 891, 1883, 903);
  t(1677, 821, 'B+', 'start', 'm'); t(1724, 821, 'B-', 'start', 'm'); t(1868, 921, '+PK', 'start', 'm'); tag(1865, 886, 1878, 897);
  title(1680, 968, 'Optical LED Light');
  [1027, 1071, 1117, 1161].forEach((y, i) => {
    if (i < 3) J(1657, y);
    N(`M1657 ${y}H1681M1758 ${y}H1794M1836 ${y}H1871`); R(`M1681 ${y}H1758M1794 ${y}H1804M1826 ${y}H1836`);
    box += `M1713 ${y - 6}V${y + 6}M1713 ${y}L1720 ${y - 5}H1725V${y + 4}H1720Z`; fill += `M1709 ${y - 17}h8l6 6l-4 2l-9 -4z`;
    zh(1804, y, 22); tag(1876, y - 5, 1895, y + 4, 'l');
    t(1702, y - 16, 'D' + (i + 1), 'start', 'm'); t(1702, y + 14, 'SML-P11MTT86', 'start', 'm');
    t(1818, y + 13, i ? 'R4' : '', 'start', 'm'); t(1682, y - 3, 'C'); t(1748, y - 3, 'A');
  });
  t(1796, 1017, 'R2', 'start', 'm'); tag(1639, 1022, 1652, 1031);

  /* microcontroller */
  title(1916, 787, 'MicroController');
  box += 'M1961 823H2119V1241H1961Z'; t(1961, 820, 'U1', 'start', 'm'); t(1960, 1252, 'RP2040', 'start', 'm');
  R('M2038 1037h7M2041 1033v8M1961 930L1970 935L1961 940M2119 908L2110 913L2119 918');
  pins(1938, 1961, [912, 935, 947, 981, 993]);
  [['VREG_VIN', 891, 44], ['RUN', 912, 26], ['SWCLK', 935, 24], ['SWDIO', 947, 25], ['XIN', 981, 20], ['XOUT', 993, 21]].forEach(p => { t(1970, p[1] + 3, p[0]); t(1950, p[1] - 2, p[2], 'end'); });
  [1027, 1037, 1049, 1059, 1071, 1083, 1093, 1105, 1117, 1127, 1139, 1149, 1161, 1173, 1183].forEach((y, i) => {
    N(`M1916 ${y}H1940`); R(`M1940 ${y}H1961`); t(1970, y + 2, 'GPIO' + i); t(1950, y - 2, i + 2, 'end');
    const adc = i > 10; t(2108, y + 2, adc ? `GPIO${15 + i}/ADC${i - 11}` : 'GPIO' + (15 + i), 'end'); t(2128, y - 2, 18 + i);
  });
  [[1901, 1022, 1032], [1901, 1032, 1041], [1901, 1046, 1055], [1901, 1055, 1065], [1905, 1067, 1075], [1905, 1079, 1088], [1905, 1088, 1097], [1905, 1101, 1109], [1901, 1113, 1122], [1901, 1122, 1131], [1901, 1135, 1145], [1901, 1145, 1155], [1901, 1156, 1167], [1901, 1169, 1178], [1901, 1178, 1189]].forEach(p => tag(p[0], p[1], 1912, p[2]));
  const ry = [835, 845, 857, 869, 891, 913, 925, 935, 947, 959, 969, 993, 1003];
  ['ADC_AVDD', 'DVDD', 'IOVDD', 'USB_VDD', 'VREG_VOUT', 'QSPI_SCLK', 'QSPI_SD0', 'QSPI_SD1', 'QSPI_SD2', 'QSPI_SD3', 'QSPI_CSN', 'USB_DM', 'USB_DP'].forEach((s, i) => { t(2108, ry[i] + 2, s, 'end'); t(2128, ry[i] - 2, 43 + i); });
  t(2106, 1209, 'TESTEN', 'end'); t(2108, 1231, 'GND', 'end'); t(2128, 1205, '19'); t(2128, 1227, '57');
  pins(2119, 2144, [...ry, 1027, 1037, 1049, 1059, 1071, 1083, 1093, 1105, 1117, 1127, 1139, 1149, 1161, 1173, 1183, 1207, 1229]);
  N('M2142 891H2175M2142 993H2176M2142 1003H2176M2142 1027H2166M2142 1037H2166M2142 1049H2166M2142 1059H2166M2142 1083H2199M2165 1083V1071M2142 1093H2199M2187 1093V1127M2142 1105H2166M2142 1117H2166M2142 1207H2155M2142 1229H2165V1240');
  [1127, 1139, 1149, 1161, 1173, 1183].forEach(y => N(`M2142 ${y}H2155`));
  tag(2180, 885, 2209, 897, 'l'); t(2162, 992, 'D-', 'start', 'm'); t(2162, 1003, 'D+', 'start', 'm');
  [[2168, 1021, 2181, 1031], [2168, 1031, 2181, 1041], [2168, 1045, 2181, 1055], [2168, 1055, 2181, 1064], [2202, 1077, 2215, 1088], [2202, 1088, 2215, 1099], [2168, 1100, 2181, 1109], [2168, 1112, 2181, 1121], [2157, 1123, 2167, 1131], [2157, 1134, 2169, 1144], [2157, 1145, 2167, 1155], [2157, 1156, 2169, 1165], [2157, 1169, 2169, 1178], [2157, 1178, 2169, 1187], [2157, 1203, 2169, 1211], [2168, 1225, 2183, 1233]].forEach(p => tag(...p, 'l'));
  R('M2165 1071H2175M2198 1071H2208M2187 1127H2199M2220 1127H2231M2153 1207V1211M2165 1240V1251'); zh(2175, 1071, 23); zh(2199, 1127, 21); J(2165, 1083);
  dia(2153, 1215); dia(2165, 1257); t(2142, 1229, 'TP1+'); t(2152, 1271, '+GND', 'start', 'm');
  N('M2208 1071H2277V1127H2231'); J(2277, 1127); tag(2282, 1123, 2305, 1133, 'l');

  /* USB pull-downs */
  N('M2074 677H2143V711M2143 689H2233M2074 699H2175V733H2233V746M2109 699V711M2109 754V779H2165M2143 754V779'); J(2143, 689, 2109, 699);
  R('M2109 711V722M2143 711V722M2109 744V754M2143 744V754M2233 689V700M2233 746V755'); zv(2109, 722, 22); zv(2143, 722, 22); dia(2232, 704); dia(2232, 760);
  tag(2169, 773, 2187, 783, 'l'); t(2072, 677, 'D-', 'start', 'm'); t(2072, 699, 'D+', 'start', 'm'); t(2218, 719, 'D-', 'start', 'm'); t(2218, 776, 'D+', 'start', 'm');
  t(2101, 754, '+R14', 'start', 'm', -90); t(2135, 754, '+R15', 'start', 'm', -90); t(2101, 710, '27 ohm', 'start', 'm', -90); t(2135, 682, '+27k', 'start', 'm', -90);

  /* audio block */
  N('M2277 836V823H2469V845H2525M2277 878V1037H2324M2299 823V836M2299 878V879H2367V868M2333 823V836M2333 868V879M2367 823V836M2345 879V947H2367M2357 947V969H2322M2277 969H2290M2389 767V925H2469V878M2401 823V836M2423 823V836M2401 879H2423V892M2401 925V935M2401 980V993M2366 1037H2434');
  J(2299, 823, 2333, 823, 2367, 823, 2401, 823, 2423, 823, 2333, 879, 2423, 879, 2401, 925, 2423, 925, 2357, 947, 2277, 969, 2469, 845, 2401, 1037);
  R('M2277 836V843M2277 868V878M2299 836V843M2299 868V878M2333 836V868M2367 836V868M2469 845V878M2401 836V879M2423 836V879M2423 892V923M2389 767H2401M2290 969H2322M2367 947H2376M2401 993V1002M2401 1026V1035M2324 1037H2336M2353 1037H2366');
  zv(2277, 843, 25); zv(2299, 843, 25); zv(2401, 1002, 24); cap(2333, 845); cap(2367, 845); cap(2469, 857); cap(2423, 903);
  fill += 'M2396 840h10v34h-10zM2418 840h10v34h-10z'; box += 'M2311 958V982M2303 958Q2308 970 2303 982M2336 1027H2353V1041H2336ZM2322 1015H2368M2322 1015L2340 1027M2367 1015L2349 1027M2345 1022V1030';
  npn(2376, 934); dia(2407, 767); tag(2529, 841, 2553, 851, 'l'); tag(2438, 1033, 2453, 1041, 'l'); tag(2305, 1043, 2319, 1053, 'l');
  t(2325, 833, 'C1', 'start', 'm'); t(2369, 833, 'C2', 'start', 'm'); t(2425, 900, 'C3', 'start', 'm'); t(2471, 855, 'C4', 'start', 'm'); t(2348, 914, '+V', 'start', 'm'); t(2394, 876, '+L1', 'start', 's', -90); t(2416, 876, '+L2', 'start', 's', -90); t(2313, 981, 'C5'); t(2309, 1032, '+1', 'start', 'm'); t(2416, 782, '+-', 'start', 's', -90);

  /* camera */
  title(1724, 1262, 'Camera');
  [[1713, 14, '+P10'], [1747, 20, '+P3'], [1781, 11, '+P8'], [1805, 10, '+P7'], [1827, 10, '+P6'], [1849, 10, '+P5']].forEach(([x, w, s]) => {
    N(`M${x} 1285V1298`); R(`M${x} 1298V1306`); dia(x, 1312); tag(x + 4, 1281, x + 4 + w, 1288, 'l'); t(x - 13, 1326, s, 'start', 'm');
  });

  return `<path d="${grayFill}" fill="#a0a0a0"/><path d="${gray}" class="g"/><path d="${net}" class="n"/><path d="${sym}" class="r"/><path d="${box}" class="r"/><path d="${rings}" class="r ring"/><path d="${fill}" fill="#d43b3d"/><path d="${dots}" fill="#35b78c"/>${txt}
<path d="M1278 1195H1317M1297 1176V1215" stroke="#000" stroke-width="2" stroke-dasharray="2 2" fill="none"/>`;
}
define('schematic-canvas', () => `<style>
:host{display:grid;min-height:0;min-width:0;grid-template:minmax(0,1fr) 32px/minmax(0,1fr) 32px;background:#eee}
svg{display:block;width:100%;height:100%;background:#fff}
.n,.r,.g{fill:none;stroke-width:2}.n{stroke:#3cba90}.r{stroke:#d43b3d}.g{stroke:#a0a0a0}.ring{stroke-width:4}
text{font-family:"Liberation Sans",sans-serif;fill:#d43b3d}
.x{font-size:40px}.h{font-size:22px}.b{font-size:14px}.f{font-size:13px}
.b,.f,.h{stroke:#d43b3d;stroke-opacity:.4;stroke-width:1px}
.s,.m{fill:#a0a0a0;stroke:#a0a0a0;stroke-opacity:.7;stroke-width:1px}
.s{font-size:8px}.m{font-size:10px}
.v{padding:0 10px 8px}.h2{padding:10px 0}
i{display:block;background:#808080;border-radius:6px;width:100%;height:100%}
</style><svg viewBox="848 220 2000 1498" preserveAspectRatio="xMinYMin meet" role="img" aria-label="Schematic sheet">${sheet()}</svg><div class="v"><i></i></div><div class="h2"><i></i></div>`);

define('command-line', `<style>
:host{display:flex;align-items:center;height:68px;padding:0 9px 0 16px;background:#eee}
output{width:280px;flex:none;font-size:26px}
div{position:relative;flex:1;height:52px}
input{box-sizing:border-box;width:100%;height:100%;border:2px solid #0696d7;background:#fff;font:inherit;outline:0;padding:0 40px 0 8px}
i{position:absolute;right:11px;top:22px;border:6px solid transparent;border-top:10px solid #666;border-bottom:0}
</style><output>0.1 inch (-0.4 4.1)</output><div><input type="text" aria-label="Command line"><i></i></div>`);

define('status-bar', `<style>:host{display:flex;align-items:center;justify-content:space-between;height:48px;padding:0 53px 0 12px;border-top:2px solid #808080;background:#eee;font-size:26px}span{padding-top:4px}svg{display:block}</style>
<span><slot></slot></span><svg width="42" height="38" viewBox="0 0 42 38" aria-hidden="true"><path d="M28 1L2 20L18 22L12 37L40 17L23 15Z" fill="#22b14c"/></svg>`);

define('schematic-editor', `<style>
:host{display:flex;flex-direction:column;height:100vh}
main{flex:1;min-height:0;display:flex}
.work{flex:1;min-width:0;display:flex;flex-direction:column;border-left:10px solid #d9d9d9}
schematic-canvas{flex:1}
</style>
<top-bar></top-bar><layer-bar></layer-bar>
<main><side-tools></side-tools><design-manager></design-manager><div class="work"><command-line></command-line><schematic-canvas></schematic-canvas></div></main>
<status-bar>Left-click &amp; drag to define group (or left-click to start defining a group polygon)</status-bar>`);
</script>
</body>
</html>
